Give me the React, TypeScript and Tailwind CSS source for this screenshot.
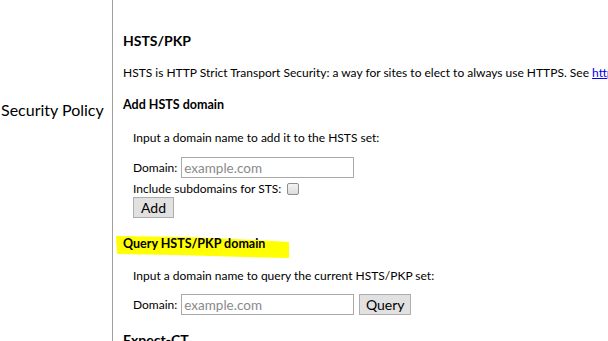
import React from 'react'

const font = "font-['Segoe_UI','Lato',sans-serif]"

function Highlight() {
  return (
    <svg className="absolute left-[-7px] top-[-1px]" width="176" height="28" viewBox="0 0 176 28">
      <polygon points="0,2 70,3 140,6 173,8 173,24 130,23 60,21 1,20" fill="#ffff00" />
    </svg>
  )
}

export default function App() {
  return (
    <div className={`flex h-[341px] w-[608px] overflow-hidden bg-white text-black ${font}`}>
      <aside className="w-[113px] shrink-0 border-r border-[#a0a0a0] pt-[99px]">
        <p className="whitespace-nowrap pl-px text-[16px] leading-[22px]">Security Policy</p>
      </aside>

      <main className="min-w-0 flex-1 whitespace-nowrap pl-[10px] text-[12px] leading-[17px]">
        <h2 className="mt-[32px] text-[14px] font-bold leading-[18px]">HSTS/PKP</h2>
        <p className="mt-[14px]">
          HSTS is HTTP Strict Transport Security: a way for sites to elect to always use HTTPS. See{' '}
          <a href="#" className="text-[#0000ee] underline">http://dev.chromium.org/sts</a>
        </p>

        <h3 className="mt-[15px] text-[12.5px] font-bold">Add HSTS domain</h3>
        <div className="pl-[10px]">
          <p className="mt-[16px]">Input a domain name to add it to the HSTS set:</p>
          <div className="mt-[11px] flex items-center gap-[4px]">
            <span>Domain:</span>
            <input
              placeholder="example.com"
              className="h-[21px] w-[173px] border border-[#a9a9a9] px-[2px] text-[13.5px] placeholder:text-[#8a8a8a]"
            />
          </div>
          <div className="mt-[2px] flex items-center gap-[6px]">
            <span>Include subdomains for STS:</span>
            <span className="h-[12px] w-[12px] rounded-[2px] border border-[#8f8f8f] bg-gradient-to-b from-[#f4f4f4] to-[#dcdcdc]" />
          </div>
          <button className="h-[21px] w-[41px] border border-[#adadad] bg-[#e1e1e1] text-[14px] leading-none">
            Add
          </button>
        </div>

        <h3 className="relative mt-[17px] text-[12.5px] font-bold">
          <Highlight />
          <span className="relative">Query HSTS/PKP domain</span>
        </h3>
        <div className="pl-[10px]">
          <p className="mt-[15px]">Input a domain name to query the current HSTS/PKP set:</p>
          <div className="mt-[10px] flex items-center gap-[4px]">
            <span>Domain:</span>
            <input
              placeholder="example.com"
              className="h-[21px] w-[173px] border border-[#a9a9a9] px-[2px] text-[13.5px] placeholder:text-[#8a8a8a]"
            />
            <button className="ml-px h-[21px] w-[52px] border border-[#adadad] bg-[#e1e1e1] text-[14px] leading-none">
              Query
            </button>
          </div>
        </div>

        <h2 className="mt-[16px] text-[14px] font-bold leading-[18px]">Expect-CT</h2>
      </main>
    </div>
  )
}
